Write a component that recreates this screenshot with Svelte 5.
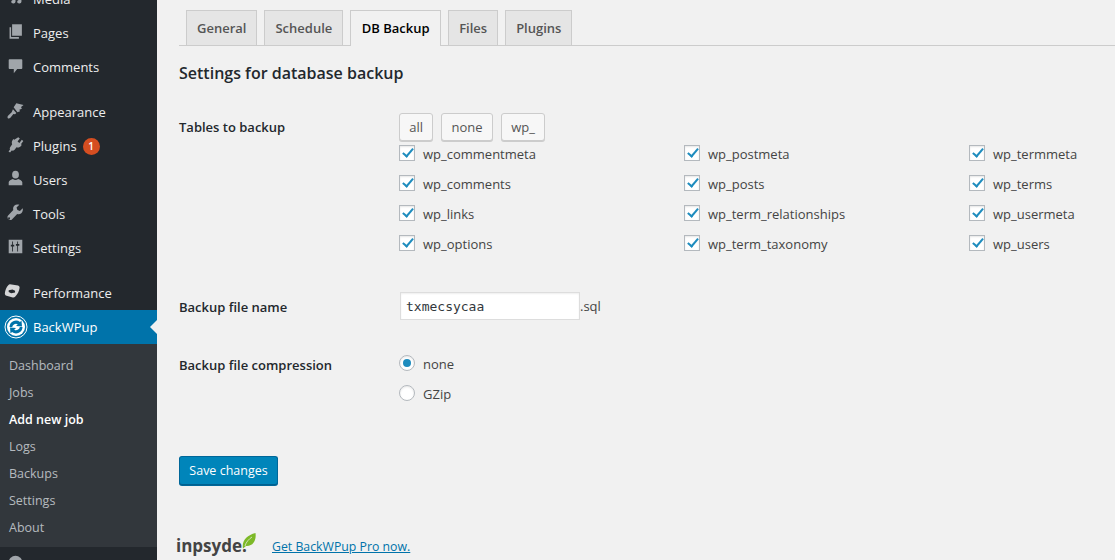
<script lang="ts">
  const tabs = ['General', 'Schedule', 'DB Backup', 'Files', 'Plugins'];
  const activeTab = 'DB Backup';

  const subMenu = ['Dashboard', 'Jobs', 'Add new job', 'Logs', 'Backups', 'Settings', 'About'];

  const tables = [
    'wp_commentmeta', 'wp_postmeta', 'wp_termmeta',
    'wp_comments', 'wp_posts', 'wp_terms',
    'wp_links', 'wp_term_relationships', 'wp_usermeta',
    'wp_options', 'wp_term_taxonomy', 'wp_users'
  ];

  let checked = $state(tables.map(() => true));
  let compression = $state('none');
  let fileName = $state('txmecsycaa');
</script>

<div class="page">
  <aside class="sidebar">
    <ul class="menu">
      <li class="item">
        <svg class="icon" viewBox="0 0 20 20"><path d="M2 1h6v3H2zM5 5l5-2v12a2.500 2 0 1 1-2-2V6.500L5 7.500zM13 5h4v10a2.500 2 0 1 1-2-2V8h-2z" /></svg>
        Media
      </li>
      <li class="item">
        <svg class="icon" viewBox="0 0 20 20"><path d="M6 1.500h11.500V15H6z" /><path d="M3 5h1.800v11.500H14V18.500H3z" /></svg>
        Pages
      </li>
      <li class="item">
        <svg class="icon" viewBox="0 0 20 20"><path d="M3 2.500h14a1 1 0 0 1 1 1v9.500a1 1 0 0 1-1 1h-5l-4 5v-5H3a1 1 0 0 1-1-1V3.500a1 1 0 0 1 1-1z" /></svg>
        Comments
      </li>
      <li class="sep"></li>
      <li class="item">
        <svg class="icon" viewBox="0 0 20 20"><path d="M11 1.500l8.500 2-3 2.500 1 2-3 1 .8 2-3 1.200-4.500-6zM7 8.500l4 4.500-1.500 1.500-2-.5-3.500 4.500c-1 1-2.300 1.300-3 .5s-.5-2 .5-3L5.500 12z" /></svg>
        Appearance
      </li>
      <li class="item">
        <svg class="icon" viewBox="0 0 20 20"><path d="M13.200 1.500l1.900 1.300-2.700 3.800 2.200 1.600 2.800-3.700 1.800 1.300-2.800 3.800 1 .8-.7 1c-1.300 1.800-3.500 2.500-5.500 1.800l-2 2.700c-1 1.300-2.500 1.600-3.700 1.200L3.600 19.500 1.800 18.200l1.800-2.300c-.6-1-.4-2.300.5-3.400l2-2.800C5.300 8 5.500 6.200 6.700 4.600l.7-1 1.100.8z" /></svg>
        Plugins <span class="badge">1</span>
      </li>
      <li class="item">
        <svg class="icon" viewBox="0 0 20 20"><ellipse cx="10" cy="5.500" rx="4" ry="4.500" /><path d="M2 18v-3.500c0-2 3-3.500 5-4 2 1.500 4 1.500 6 0 2 .5 5 2 5 4v3.500z" /></svg>
        Users
      </li>
      <li class="item">
        <svg class="icon" viewBox="0 0 20 20"><path d="M18.500 5l-3.300 3.200-3-1-1-3L14.500 1c-2.500-.8-4.500-.3-6 1.200-1.300 1.300-1.600 3-1.100 4.800L1.300 13.500c-1 1-1 2.600 0 3.700l1 1c1 1 2.500 1 3.500 0l6.200-6.300c1.800.5 3.500.2 4.800-1 1.500-1.500 2.200-3.700 1.700-5.900zM3.500 17a1.200 1.200 0 1 1 0-.1z" /></svg>
        Tools
      </li>
      <li class="item">
        <svg class="icon" viewBox="0 0 20 20"><path fill-rule="evenodd" d="M2 2h16v16H2zM7 4H6v4H4.500v2H6v6h1v-6h1.500V8H7zM13 4h-1v3h-1.500v2H12v7h1V9h1.500V7H13z" /></svg>
        Settings
      </li>
      <li class="sep"></li>
      <li class="item">
        <svg class="icon perf" viewBox="0 0 20 20"><path d="M7 1.500l9.500 1.500c1.500.5 2 1.500 1.800 3-.5 3.500-2 7-5 10-1 1-2 1.300-3 1L3 15c-1.500-.5-2-1.500-2-3 .3-3.500 2-7.500 4-9.500.6-.7 1.200-1 2-1z" /><path class="perf-mark" d="M5.500 8.500l4.500-.8 3 1.300v2.200l-4.500.8-3-1.300z" /></svg>
        Performance
      </li>
      <li class="item current">
        <svg class="icon logo" viewBox="0 0 24 24">
          <circle cx="12" cy="12" r="11" fill="none" stroke="#fff" stroke-width="1" />
          <circle cx="12" cy="12" r="9" fill="#fff" />
          <path class="logo-arc" d="M5.500 12a6.500 6.500 0 0 1 10.500-5l1.500-1.500.5 6-6-.5 1.800-1.800A3.800 3.800 0 0 0 8.200 12zM18.500 12A6.500 6.500 0 0 1 8 17l-1.500 1.500-.5-6 6 .5-1.800 1.800a3.800 3.800 0 0 0 5.600-2.800z" />
        </svg>
        BackWPup
        <span class="arrow"></span>
      </li>
      <li>
        <ul class="submenu">
          {#each subMenu as name}
            <li class:on={name === 'Add new job'}>{name}</li>
          {/each}
        </ul>
      </li>
      <li class="item">
        <svg class="icon" viewBox="0 0 20 20"><circle cx="10" cy="10" r="8" /></svg>
      </li>
    </ul>
  </aside>

  <main class="content">
    <nav class="tabs">
      {#each tabs as tab}
        <span class="tab" class:active={tab === activeTab}>{tab}</span>
      {/each}
    </nav>

    <h3>Settings for database backup</h3>

    <div class="row tables-row">
      <div class="label">Tables to backup</div>
      <div class="field">
        <div class="buttons">
          <button type="button">all</button>
          <button type="button">none</button>
          <button type="button">wp_</button>
        </div>
        <div class="table-grid">
          {#each tables as table, i}
            <label class="check">
              <input type="checkbox" bind:checked={checked[i]} />
              <span>{table}</span>
            </label>
          {/each}
        </div>
      </div>
    </div>

    <div class="row name-row">
      <div class="label">Backup file name</div>
      <div class="field inline">
        <input type="text" class="name" bind:value={fileName} /><span>.sql</span>
      </div>
    </div>

    <div class="row compress-row">
      <div class="label">Backup file compression</div>
      <div class="field radios">
        <label class="check">
          <input type="radio" value="none" bind:group={compression} />
          <span>none</span>
        </label>
        <label class="check">
          <input type="radio" value="gzip" bind:group={compression} />
          <span>GZip</span>
        </label>
      </div>
    </div>

    <button type="button" class="primary">Save changes</button>

    <footer class="foot">
      <span class="brand">inpsyde<span class="dot">.</span>
        <svg class="leaf" viewBox="0 0 14 16"><path d="M1 15.500C-.5 8 5 2 13.500 0c1 7-2 13.500-9.500 13z" fill="#7db928" /><path d="M3 13c1-4 4-7 7-9" stroke="#f1f1f1" fill="none" stroke-width=".7" /></svg>
      </span>
      <a href="#pro">Get BackWPup Pro now.</a>
    </footer>
  </main>
</div>

<style>
  :global(body) {
    margin: 0;
    background: #f1f1f1;
  }

  .page {
    display: flex;
    height: 560px;
    overflow: hidden;
    font-family: "Open Sans", sans-serif;
    font-size: 13px;
    color: #444;
  }

  /* Sidebar */
  .sidebar {
    width: 157px;
    flex-shrink: 0;
    background: #23282d;
  }

  .menu {
    list-style: none;
    margin: -18px 0 0;
    padding: 0;
  }

  .item {
    position: relative;
    display: flex;
    align-items: center;
    height: 34px;
    padding-left: 33px;
    font-size: 13px;
    color: #eee;
  }

  .sep {
    height: 11px;
  }

  .icon {
    position: absolute;
    left: 7px;
    top: 7px;
    width: 17px;
    height: 17px;
    fill: #a0a5aa;
  }

  .perf {
    left: 4px;
    top: 7px;
    width: 17px;
    height: 17px;
    fill: #d5d6d7;
  }

  .perf-mark {
    fill: #23282d;
  }

  .current {
    background: #0073aa;
    color: #fff;
  }

  .logo {
    left: 4px;
    top: 5px;
    width: 24px;
    height: 24px;
  }

  .logo-arc {
    fill: #0073aa;
  }

  .arrow {
    position: absolute;
    right: 0;
    top: 10px;
    border: 7px solid transparent;
    border-right-color: #f1f1f1;
    border-left-width: 0;
  }

  .badge {
    display: inline-block;
    width: 17px;
    height: 17px;
    margin-left: 6px;
    border-radius: 50%;
    background: #d54e21;
    color: #fff;
    font-size: 10px;
    font-weight: 600;
    line-height: 17px;
    text-align: center;
  }

  .submenu {
    list-style: none;
    margin: 0;
    padding: 7px 0;
    background: #32373c;
    font-size: 12.500px;
    color: rgba(240, 245, 250, 0.7);
  }

  .submenu li {
    height: 27px;
    padding-left: 9px;
    line-height: 30px;
  }

  .submenu li.on {
    color: #fff;
    font-weight: 600;
  }

  /* Content */
  .content {
    flex: 1;
    min-width: 0;
    padding: 10px 0 0 22px;
  }

  .tabs {
    display: flex;
    gap: 7px;
    height: 35px;
    padding-left: 7px;
    border-bottom: 1px solid #ccc;
  }

  .tab {
    height: 34px;
    padding: 0 10px;
    border: 1px solid #ccc;
    border-bottom: none;
    background: #e5e5e5;
    color: #555;
    font-size: 13px;
    font-weight: 600;
    line-height: 35px;
  }

  .tab.active {
    height: 35px;
    padding: 0 10.500px;
    background: #f1f1f1;
    color: #000;
  }

  h3 {
    margin: 17px 0 0;
    color: #23282d;
    font-size: 16px;
    font-weight: 600;
    line-height: 21px;
  }

  .row {
    display: flex;
  }

  .label {
    width: 220px;
    flex-shrink: 0;
    color: #23282d;
    font-size: 13px;
    font-weight: 600;
  }

  .tables-row {
    margin-top: 29px;
  }

  .tables-row .label {
    padding-top: 5px;
  }

  .buttons {
    display: flex;
    gap: 8px;
    margin-bottom: 4px;
  }

  button {
    font: inherit;
    cursor: pointer;
  }

  .buttons button {
    height: 28px;
    padding: 0 9.250px;
    border: 1px solid #ccc;
    border-radius: 3px;
    background: #f7f7f7;
    box-shadow: 0 1px 0 #ccc;
    color: #555;
  }

  .table-grid {
    display: grid;
    grid-template-columns: repeat(3, 285px);
    grid-auto-rows: 30px;
  }

  .check {
    display: flex;
    align-items: flex-start;
    gap: 8px;
    font-size: 13px;
    line-height: 18px;
    color: #444;
  }

  .check input {
    appearance: none;
    position: relative;
    width: 16px;
    height: 16px;
    margin: 0;
    border: 1px solid #b4b9be;
    background: #fff;
    box-shadow: inset 0 1px 2px rgba(0, 0, 0, 0.1);
  }

  .check input[type="checkbox"]:checked::before {
    content: '';
    position: absolute;
    left: 4.500px;
    top: 0;
    width: 4px;
    height: 9px;
    border: solid #1e8cbe;
    border-width: 0 2.500px 2.500px 0;
    transform: rotate(40deg);
  }

  .check input[type="radio"] {
    border-radius: 50%;
  }

  .check input[type="radio"]:checked::before {
    content: '';
    position: absolute;
    left: 3px;
    top: 3px;
    width: 8px;
    height: 8px;
    border-radius: 50%;
    background: #1e8cbe;
  }

  .name-row {
    margin-top: 27px;
    align-items: center;
  }

  .name-row .label {
    padding-top: 2px;
  }

  .inline {
    display: flex;
    align-items: center;
    padding-left: 1px;
  }

  .name {
    box-sizing: border-box;
    width: 180px;
    height: 28px;
    padding: 1px 5px 0;
    border: 1px solid #ddd;
    background: #fff;
    box-shadow: inset 0 1px 2px rgba(0, 0, 0, 0.07);
    color: #32373c;
    font-family: "DejaVu Sans Mono", monospace;
    font-size: 13px;
    outline: none;
  }

  .compress-row {
    margin-top: 35px;
  }

  .compress-row .label {
    padding-top: 1px;
    line-height: 18px;
  }

  .radios {
    display: flex;
    flex-direction: column;
    gap: 12px;
  }

  .primary {
    display: block;
    width: 99px;
    height: 29px;
    margin-top: 53px;
    padding: 0;
    border: 1px solid #006799;
    border-bottom-color: #00608f;
    border-radius: 3px;
    background: #0085ba;
    box-shadow: 0 1px 0 #006799;
    color: #fff;
    font-size: 12.500px;
  }

  .foot {
    display: flex;
    align-items: center;
    gap: 14px;
    margin: 49px 0 0 -3px;
  }

  .brand {
    position: relative;
    width: 82px;
    color: #444;
    font-size: 17px;
    font-weight: 700;
    line-height: 24px;
  }

  .leaf {
    position: absolute;
    left: 66px;
    top: -1px;
    width: 14px;
    height: 16px;
  }

  .foot a {
    color: #0073aa;
    font-size: 12.300px;
  }
</style>
